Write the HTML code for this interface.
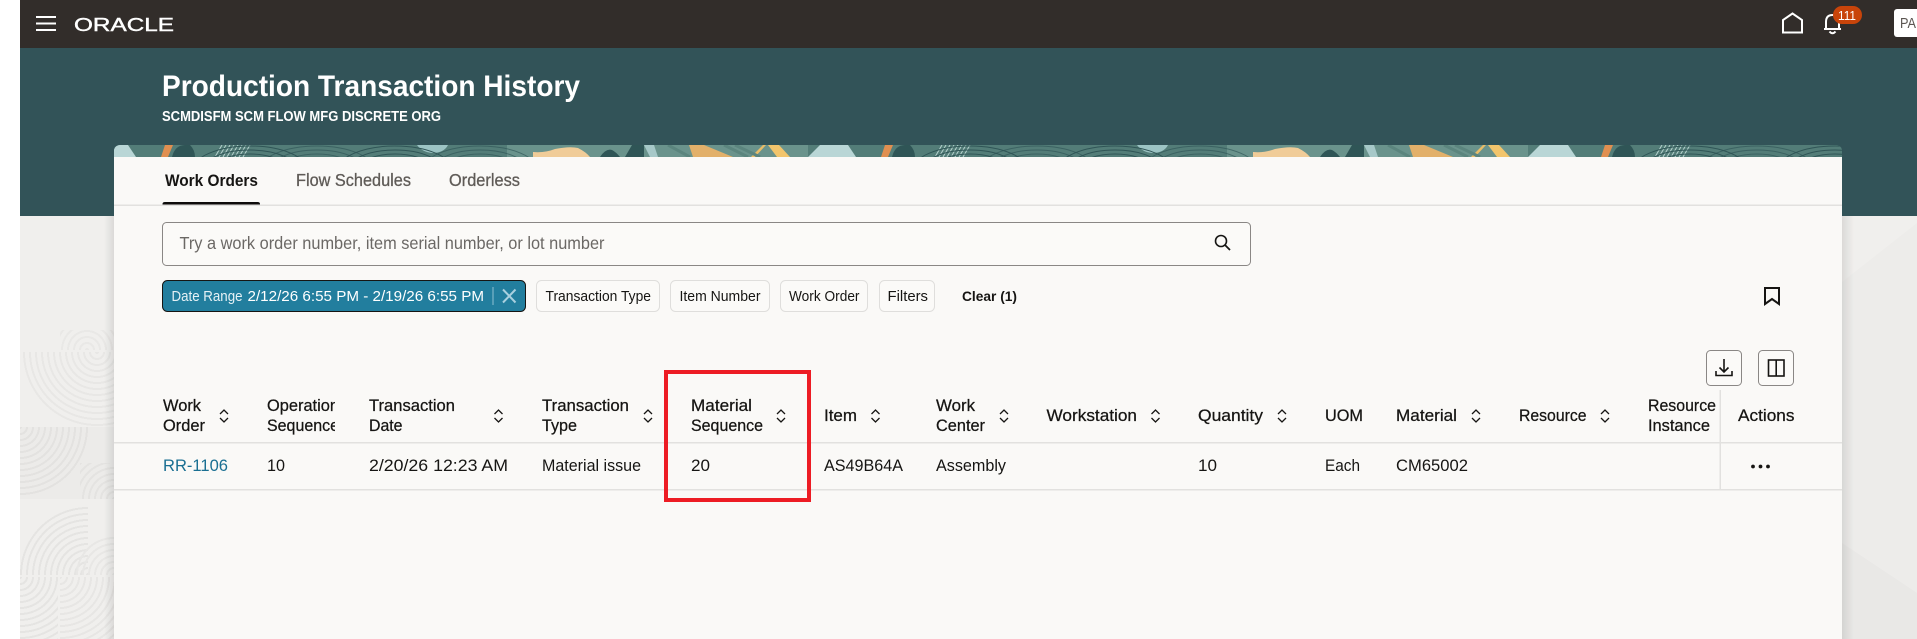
<!DOCTYPE html>
<html lang="en"><head><meta charset="utf-8"><title>Production Transaction History</title>
<style>
html,body{margin:0;padding:0;width:1917px;height:639px;overflow:hidden;background:#fff}
#bg{position:absolute;left:20px;top:216px;width:1897px;height:423px;background:#f0efed;overflow:hidden}
.r{position:absolute}
svg{position:absolute;left:0;top:0}
text{font-family:"Liberation Sans",sans-serif;fill:#161513;font-size:16.5px}
.h{stroke:#161513;stroke-width:.25px}
</style></head><body>
<div id="bg">
<div class="r" style="left:0;top:136px;width:94px;height:75px;background:repeating-radial-gradient(circle at 77px 0,#e8e7e5 0 2px,transparent 2px 6px);-webkit-mask-image:radial-gradient(circle at 77px 0,#000 74px,transparent 74px)"></div>
<div class="r" style="left:40px;top:114px;width:54px;height:20px;background:repeating-radial-gradient(circle at 27px 20px,#e9e8e6 0 2px,transparent 2px 6px)"></div>
<div class="r" style="left:0;top:211px;width:94px;height:72px;background:#ecebe9"></div>
<div class="r" style="left:0;top:211px;width:94px;height:72px;background:repeating-radial-gradient(circle at 0 0,#e3e2e0 0 2px,transparent 2px 6px);-webkit-mask-image:radial-gradient(circle at 0 0,#000 72px,transparent 72px)"></div>
<div class="r" style="left:60px;top:247px;width:34px;height:36px;background:repeating-radial-gradient(circle at 34px 36px,#e4e3e1 0 2px,transparent 2px 6px)"></div>
<div class="r" style="left:0;top:284px;width:68px;height:75px;background:repeating-radial-gradient(circle at 68px 75px,#e5e4e2 0 2px,transparent 2px 6px);-webkit-mask-image:radial-gradient(circle at 68px 75px,#000 70px,transparent 70px)"></div>
<div class="r" style="left:56px;top:284px;width:38px;height:75px;background:repeating-radial-gradient(circle at 38px 75px,#e8e7e5 0 2px,transparent 2px 6px);-webkit-mask-image:radial-gradient(circle at 38px 75px,#000 38px,transparent 38px)"></div>
<div class="r" style="left:40px;top:361px;width:54px;height:62px;background:repeating-radial-gradient(circle at 0 0,#e7e6e4 0 2px,transparent 2px 6px)"></div>
<div class="r" style="left:0;top:361px;width:38px;height:62px;background:repeating-radial-gradient(circle at 0 0,#e5e4e2 0 2px,transparent 2px 6px)"></div>
<div class="r" style="left:1822px;top:0;width:75px;height:423px;background:#edecea"></div>
</div>
<svg width="1917" height="639" viewBox="0 0 1917 639" xmlns="http://www.w3.org/2000/svg">
<defs>
<linearGradient id="sl" x1="0" x2="1" y1="0" y2="0"><stop offset="0" stop-color="#000" stop-opacity="0"/><stop offset="1" stop-color="#000" stop-opacity=".09"/></linearGradient>
<linearGradient id="sr" x1="0" x2="1" y1="0" y2="0"><stop offset="0" stop-color="#000" stop-opacity=".09"/><stop offset="1" stop-color="#000" stop-opacity="0"/></linearGradient>
<clipPath id="band"><path d="M114 157V151a6 6 0 0 1 6-6H1836a6 6 0 0 1 6 6V157Z"/></clipPath>
<clipPath id="op"><rect x="260" y="390" width="75" height="50"/></clipPath>
<clipPath id="ri"><rect x="1640" y="390" width="76" height="50"/></clipPath>
<clipPath id="pa"><rect x="1894" y="9" width="23" height="28"/></clipPath>
<g id="arcs" fill="none" stroke="#2f5556" stroke-width="1"><ellipse rx="18" ry="9"/><ellipse rx="28" ry="13"/><ellipse rx="38" ry="17"/><ellipse rx="48" ry="21"/><ellipse rx="58" ry="25"/></g>
<g id="sort" fill="none" stroke="#161513" stroke-width="1.3"><path d="M-4 -2L0 -6L4 -2M-4 2L0 6L4 2"/></g>
<g id="tile">
<rect x="88" y="145" width="720" height="12" fill="#537d78"/>
<rect x="507" y="145" width="301" height="12" fill="#6a938c"/>
<path d="M114 145H128L136 157H114Z" fill="#b9d6d6"/>
<path d="M88 157L100 145H116L132 157Z" fill="#b9d6d6"/>
<path d="M165 145H173L168 157H161Z" fill="#e08f50"/>
<path d="M172 157Q175 145 185 145H190Q195 150 195 157Z" fill="#2f5556"/>
<path d="M215 157L222 145M219 157L226 145M223 157L230 145M227 157L234 145M231 157L238 145M235 157L242 145M239 157L246 145M243 157L250 145" stroke="#b6d2ce" stroke-width="1" fill="none"/>
<path d="M417 145H448Q444 153 432 153Q422 152 417 145Z" fill="#9cc4c4"/>
<g opacity=".65"><use href="#arcs" x="317" y="171"/><use href="#arcs" x="480" y="171"/></g>
<use href="#arcs" x="395" y="171"/>
<use href="#arcs" x="250" y="171"/>
<path d="M533 157V152Q545 153 555 149Q570 146 578 148Q586 152 590 157Z" fill="#f0cc98"/>
<path d="M600 157Q606 148 612 150Q616 152 620 157Z" fill="#2f5556"/>
<path d="M625 157L632 145H644V157Z" fill="#2f5556"/>
<path d="M644 145H654L658 157H650Z" fill="#a6c8c8"/>
<path d="M689 145H704L733 157H693Z" fill="#e2b06a"/>
<path d="M751 157L763 145H766L755 157Z" fill="#e9bd68"/>
<path d="M768 145H779L790 157H777Z" fill="#f2c56c"/>
<path d="M668 145L690 157M724 145L748 157M735 145L760 157" stroke="#5b857e" stroke-width="3"/>
</g>
</defs>

<rect x="20" y="0" width="1897" height="48" fill="#322d2a"/>
<rect x="20" y="48" width="1897" height="168" fill="#325358"/>
<path d="M1842 216H1917V223L1842 282Z" fill="#f0efed"/>
<path d="M1842 543L1917 593V639H1842Z" fill="#e9e8e6"/>
<rect x="104" y="216" width="10" height="423" fill="url(#sl)"/>
<rect x="1842" y="216" width="12" height="423" fill="url(#sr)"/>

<!-- header -->
<path d="M36 17H56M36 23.500H56M36 30H56" stroke="#fff" stroke-width="2"/>
<text x="74" y="31" textLength="100" lengthAdjust="spacingAndGlyphs" style="fill:#fff;font-size:18px;stroke:#fff;stroke-width:.4px">ORACLE</text>
<path d="M1783 32.500V20L1792.500 13.500L1802 20V32.500Z" fill="none" stroke="#fff" stroke-width="2"/>
<path d="M1824 29H1841M1826 29V22Q1826 15 1832.500 15Q1839 15 1839 22V29M1829.500 31.500Q1832.500 35 1835.500 31.500" fill="none" stroke="#fff" stroke-width="2"/>
<rect x="1833" y="6" width="29" height="18" rx="9" fill="#c8440a"/>
<text x="1838" y="20" textLength="18" lengthAdjust="spacingAndGlyphs" style="fill:#fff;font-size:12.500px">111</text>
<rect x="1894" y="9" width="30" height="28" rx="3" fill="#fff" clip-path="url(#pa)"/>
<text x="1900" y="28" textLength="16" lengthAdjust="spacingAndGlyphs" style="fill:#5b5652;font-size:15px">PA</text>

<text x="162" y="96" textLength="418" lengthAdjust="spacingAndGlyphs" font-weight="700" style="fill:#fff;font-size:30px">Production Transaction History</text>
<text x="162" y="121" textLength="279" lengthAdjust="spacingAndGlyphs" font-weight="700" style="fill:#fff;font-size:14.500px">SCMDISFM SCM FLOW MFG DISCRETE ORG</text>

<!-- card -->
<g clip-path="url(#band)"><rect x="114" y="145" width="1728" height="12" fill="#537d78"/><use href="#tile"/><use href="#tile" x="720"/><use href="#tile" x="1440"/></g>
<rect x="114" y="157" width="1728" height="482" fill="#faf9f7"/>

<text x="165" y="186" textLength="93" lengthAdjust="spacingAndGlyphs" font-weight="700" style="font-size:17px">Work Orders</text>
<text x="296" y="186" textLength="115" lengthAdjust="spacingAndGlyphs" style="fill:#5f5b57;font-size:17.500px;stroke:#5f5b57;stroke-width:.3px">Flow Schedules</text>
<text x="449" y="186" textLength="71" lengthAdjust="spacingAndGlyphs" style="fill:#5f5b57;font-size:17.500px;stroke:#5f5b57;stroke-width:.3px">Orderless</text>
<path d="M162.500 205V204Q162.500 202 165 202H257.500Q260 202 260 204V205Z" fill="#0e0c0b"/>
<rect x="114" y="204.500" width="1728" height="1.500" fill="#e2e1df"/>

<!-- search -->
<rect x="162.500" y="222.500" width="1088" height="43" rx="4" fill="#fbfaf8" stroke="#8a8785"/>
<text x="179.500" y="249" textLength="425" lengthAdjust="spacingAndGlyphs" style="fill:#6b6865;font-size:17.500px">Try a work order number, item serial number, or lot number</text>
<circle cx="1221" cy="241" r="5.500" fill="none" stroke="#161513" stroke-width="1.600"/>
<path d="M1225 245L1230 250" stroke="#161513" stroke-width="1.800"/>

<!-- chips -->
<rect x="162.500" y="280.500" width="363" height="31" rx="5" fill="#227e9e" stroke="#161513"/>
<text x="171.500" y="301" textLength="71" lengthAdjust="spacingAndGlyphs" style="fill:#e6f1f5;font-size:14.500px">Date Range</text>
<text x="247.500" y="301" textLength="236.500" lengthAdjust="spacingAndGlyphs" style="fill:#fff;font-size:14.500px">2/12/26 6:55 PM - 2/19/26 6:55 PM</text>
<path d="M493 287V305" stroke="#8fc0d2" stroke-width="1"/>
<path d="M503 289.500L515.500 302.500M515.500 289.500L503 302.500" stroke="#a9d0df" stroke-width="2"/>
<g fill="#fbfaf8" stroke="#dfdedc">
<rect x="536.500" y="280.500" width="123" height="31" rx="5"/>
<rect x="670.500" y="280.500" width="99" height="31" rx="5"/>
<rect x="780.500" y="280.500" width="87" height="31" rx="5"/>
<rect x="879.500" y="280.500" width="55" height="31" rx="5"/>
</g>
<text x="545.500" y="301" textLength="105.500" lengthAdjust="spacingAndGlyphs" style="font-size:14.500px">Transaction Type</text>
<text x="679.500" y="301" textLength="81" lengthAdjust="spacingAndGlyphs" style="font-size:14.500px">Item Number</text>
<text x="789" y="301" textLength="70.500" lengthAdjust="spacingAndGlyphs" style="font-size:14.500px">Work Order</text>
<text x="887.500" y="301" textLength="40.500" lengthAdjust="spacingAndGlyphs" style="font-size:14.500px">Filters</text>
<text x="962" y="301" textLength="55" lengthAdjust="spacingAndGlyphs" font-weight="700" style="font-size:14px">Clear (1)</text>
<path d="M1765 288H1779V304L1772 299L1765 304Z" fill="none" stroke="#161513" stroke-width="2"/>

<!-- table buttons -->
<rect x="1706.500" y="350.500" width="35" height="35" rx="4" fill="#fbfaf8" stroke="#8a8785"/>
<rect x="1758.500" y="350.500" width="35" height="35" rx="4" fill="#fbfaf8" stroke="#8a8785"/>
<path d="M1724 359V372M1719.500 367.500L1724 372L1728.500 367.500M1716 371V375.500H1732V371" fill="none" stroke="#161513" stroke-width="1.600"/>
<rect x="1768.500" y="360" width="15.500" height="16" fill="none" stroke="#161513" stroke-width="1.600"/>
<path d="M1776.200 360V376" stroke="#161513" stroke-width="1.600"/>

<!-- table header -->
<g>
<text class="h" x="163" y="411" textLength="38" lengthAdjust="spacingAndGlyphs">Work</text>
<text class="h" x="163" y="431" textLength="42" lengthAdjust="spacingAndGlyphs">Order</text>
<g clip-path="url(#op)"><text class="h" x="267" y="411" textLength="72" lengthAdjust="spacingAndGlyphs">Operation</text>
<text class="h" x="267" y="431" textLength="72" lengthAdjust="spacingAndGlyphs">Sequence</text></g>
<text class="h" x="369" y="411" textLength="86" lengthAdjust="spacingAndGlyphs">Transaction</text>
<text class="h" x="369" y="431" textLength="33.500" lengthAdjust="spacingAndGlyphs">Date</text>
<text class="h" x="542" y="411" textLength="87" lengthAdjust="spacingAndGlyphs">Transaction</text>
<text class="h" x="542" y="431" textLength="35" lengthAdjust="spacingAndGlyphs">Type</text>
<text class="h" x="691" y="411" textLength="61" lengthAdjust="spacingAndGlyphs">Material</text>
<text class="h" x="691" y="431" textLength="72" lengthAdjust="spacingAndGlyphs">Sequence</text>
<text class="h" x="824" y="421" textLength="33" lengthAdjust="spacingAndGlyphs">Item</text>
<text class="h" x="936" y="411" textLength="39" lengthAdjust="spacingAndGlyphs">Work</text>
<text class="h" x="936" y="431" textLength="49" lengthAdjust="spacingAndGlyphs">Center</text>
<text class="h" x="1046.500" y="421" textLength="90.500" lengthAdjust="spacingAndGlyphs">Workstation</text>
<text class="h" x="1198" y="421" textLength="65" lengthAdjust="spacingAndGlyphs">Quantity</text>
<text class="h" x="1325" y="421" textLength="38" lengthAdjust="spacingAndGlyphs">UOM</text>
<text class="h" x="1396" y="421" textLength="61" lengthAdjust="spacingAndGlyphs">Material</text>
<text class="h" x="1519" y="421" textLength="67.500" lengthAdjust="spacingAndGlyphs">Resource</text>
<g clip-path="url(#ri)"><text class="h" x="1648" y="411" textLength="68" lengthAdjust="spacingAndGlyphs">Resource</text>
<text class="h" x="1648" y="431" textLength="62" lengthAdjust="spacingAndGlyphs">Instance</text></g>
<text class="h" x="1738" y="421" textLength="56.500" lengthAdjust="spacingAndGlyphs">Actions</text>
</g>
<use href="#sort" x="224" y="416"/><use href="#sort" x="498.500" y="416"/><use href="#sort" x="648" y="416"/><use href="#sort" x="781" y="416"/><use href="#sort" x="875.500" y="416"/><use href="#sort" x="1004" y="416"/><use href="#sort" x="1155.500" y="416"/><use href="#sort" x="1282" y="416"/><use href="#sort" x="1476" y="416"/><use href="#sort" x="1605" y="416"/>

<rect x="114" y="442" width="1728" height="1.500" fill="#e2e1df"/>
<rect x="114" y="489" width="1728" height="1.500" fill="#e2e1df"/>
<rect x="1719.500" y="390" width="1.500" height="99" fill="#e2e1df"/>

<!-- row -->
<text x="163" y="471" textLength="65" lengthAdjust="spacingAndGlyphs" style="fill:#1a6f92">RR-1106</text>
<text x="267" y="471" textLength="18" lengthAdjust="spacingAndGlyphs">10</text>
<text x="369" y="471" textLength="139" lengthAdjust="spacingAndGlyphs">2/20/26 12:23 AM</text>
<text x="542" y="471" textLength="99" lengthAdjust="spacingAndGlyphs">Material issue</text>
<text x="691" y="471" textLength="19" lengthAdjust="spacingAndGlyphs">20</text>
<text x="824" y="471" textLength="79" lengthAdjust="spacingAndGlyphs">AS49B64A</text>
<text x="936" y="471" textLength="70" lengthAdjust="spacingAndGlyphs">Assembly</text>
<text x="1198" y="471" textLength="19" lengthAdjust="spacingAndGlyphs">10</text>
<text x="1325" y="471" textLength="35" lengthAdjust="spacingAndGlyphs">Each</text>
<text x="1396" y="471" textLength="72" lengthAdjust="spacingAndGlyphs">CM65002</text>
<circle cx="1753" cy="466.500" r="1.900" fill="#161513"/><circle cx="1760.500" cy="466.500" r="1.900" fill="#161513"/><circle cx="1768" cy="466.500" r="1.900" fill="#161513"/>

<!-- annotation -->
<rect x="666" y="372" width="143" height="128" fill="none" stroke="#ed1c24" stroke-width="4"/>
</svg>
</body></html>
